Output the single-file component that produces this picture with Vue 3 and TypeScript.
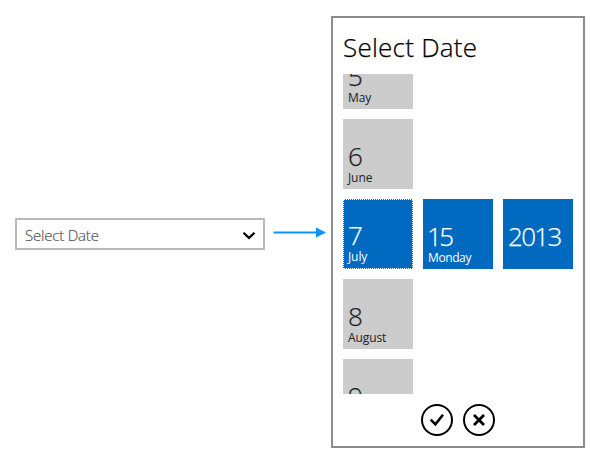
<script setup lang="ts">
interface Tile {
  value: string
  label: string
  selected?: boolean
}

const months: Tile[] = [
  { value: '5', label: 'May' },
  { value: '6', label: 'June' },
  { value: '7', label: 'July', selected: true },
  { value: '8', label: 'August' },
  { value: '9', label: '' },
]
</script>

<template>
  <main class="page">
    <button class="combo" type="button">
      <span class="combo-text">Select Date</span>
      <svg class="chevron" width="14" height="10" viewBox="0 0 14 10">
        <path d="M1.5 1.7 L7 6.9 L12.5 1.7" fill="none" stroke="#000" stroke-width="2.2" />
      </svg>
    </button>
    <svg class="arrow" width="53" height="12" viewBox="0 0 53 12">
      <path d="M0.5 6.5 H44" stroke="#0a94ff" stroke-width="2" />
      <path d="M43 1.5 L53 6.5 L43 11.5 Z" fill="#0a94ff" />
    </svg>
    <section class="panel">
      <h1 class="title">Select Date</h1>
      <div class="columns">
        <div class="column months">
          <div v-for="m in months" :key="m.value" class="tile" :class="{ selected: m.selected, focused: m.selected }">
            <span class="value">{{ m.value }}</span>
            <span class="label">{{ m.label }}</span>
          </div>
        </div>
        <div class="column">
          <div class="tile selected">
            <span class="value day">15</span>
            <span class="label monday">Monday</span>
          </div>
        </div>
        <div class="column">
          <div class="tile selected">
            <span class="value year">2013</span>
            <span class="label"></span>
          </div>
        </div>
      </div>
      <div class="actions">
        <button class="round" type="button" aria-label="Accept">
          <svg width="32" height="32" viewBox="0 0 32 32" fill="none" stroke="#000">
            <circle cx="16" cy="16" r="15" stroke-width="2" />
            <path d="M9.8 15.7 L14.4 20.3 L22 10.7" stroke-width="2.6" />
          </svg>
        </button>
        <button class="round" type="button" aria-label="Cancel">
          <svg width="32" height="32" viewBox="0 0 32 32" fill="none" stroke="#000">
            <circle cx="16" cy="16" r="15" stroke-width="2" />
            <path d="M11 11 L21 21 M21 11 L11 21" stroke-width="2.8" />
          </svg>
        </button>
      </div>
    </section>
  </main>
</template>

<style>
body {
  margin: 0;
  background: #fff;
}
</style>

<style scoped>
.page {
  box-sizing: border-box;
  width: 600px;
  height: 463px;
  padding: 16px 15px 15px;
  display: flex;
  align-items: flex-start;
  font-family: 'Open Sans', 'Noto Sans', sans-serif;
  overflow: hidden;
}
button {
  font: inherit;
  background: none;
  border: 0;
  padding: 0;
}
.combo {
  box-sizing: border-box;
  width: 250px;
  height: 32px;
  margin-top: 202px;
  padding: 0 7px 0 8px;
  border: 2px solid #b9b9b9;
  display: flex;
  align-items: center;
  justify-content: space-between;
}
.combo-text {
  font-size: 15px;
  line-height: 20px;
  font-weight: 300;
  letter-spacing: -0.2px;
  color: #555;
  -webkit-text-stroke: 0.2px #555;
  padding-top: 2px;
}
.chevron {
  margin-top: 3px;
}
.arrow {
  margin: 210px 5px 0 8px;
}
.panel {
  box-sizing: border-box;
  width: 254px;
  height: 432px;
  border: 2px solid #8b8b8b;
  padding: 0 10px;
  flex: none;
}
.title {
  margin: 0;
  height: 56px;
  padding-top: 11px;
  box-sizing: border-box;
  font-size: 26px;
  line-height: 36px;
  font-weight: 300;
  letter-spacing: 0.25px;
  white-space: nowrap;
  color: #000;
  -webkit-text-stroke: 0.25px #000;
}
.columns {
  height: 320px;
  display: flex;
  gap: 10px;
  align-items: center;
  overflow: hidden;
}
.column {
  width: 70px;
  display: flex;
  flex-direction: column;
  gap: 10px;
}
.tile {
  box-sizing: border-box;
  width: 70px;
  height: 70px;
  padding: 0 5px 3px;
  background: #ccc;
  color: #222;
  display: flex;
  flex-direction: column;
  justify-content: flex-end;
}
.selected {
  background: #006ac1;
  color: #fff;
}
.focused {
  border: 1px dotted #fff;
  padding-left: 4px;
}
.value {
  font-size: 26px;
  line-height: 28px;
  font-weight: 300;
  letter-spacing: -1.7px;
  -webkit-text-stroke: 0.25px currentColor;
}
.day {
  letter-spacing: -2.5px;
  margin-left: -1px;
}
.label {
  height: 16px;
  font-size: 12px;
  line-height: 16px;
  letter-spacing: -0.1px;
}
.monday {
  letter-spacing: -0.4px;
}
.actions {
  display: flex;
  justify-content: center;
  gap: 10px;
  padding-top: 10px;
}
.round {
  width: 32px;
  height: 32px;
}
.round svg {
  display: block;
}
</style>
